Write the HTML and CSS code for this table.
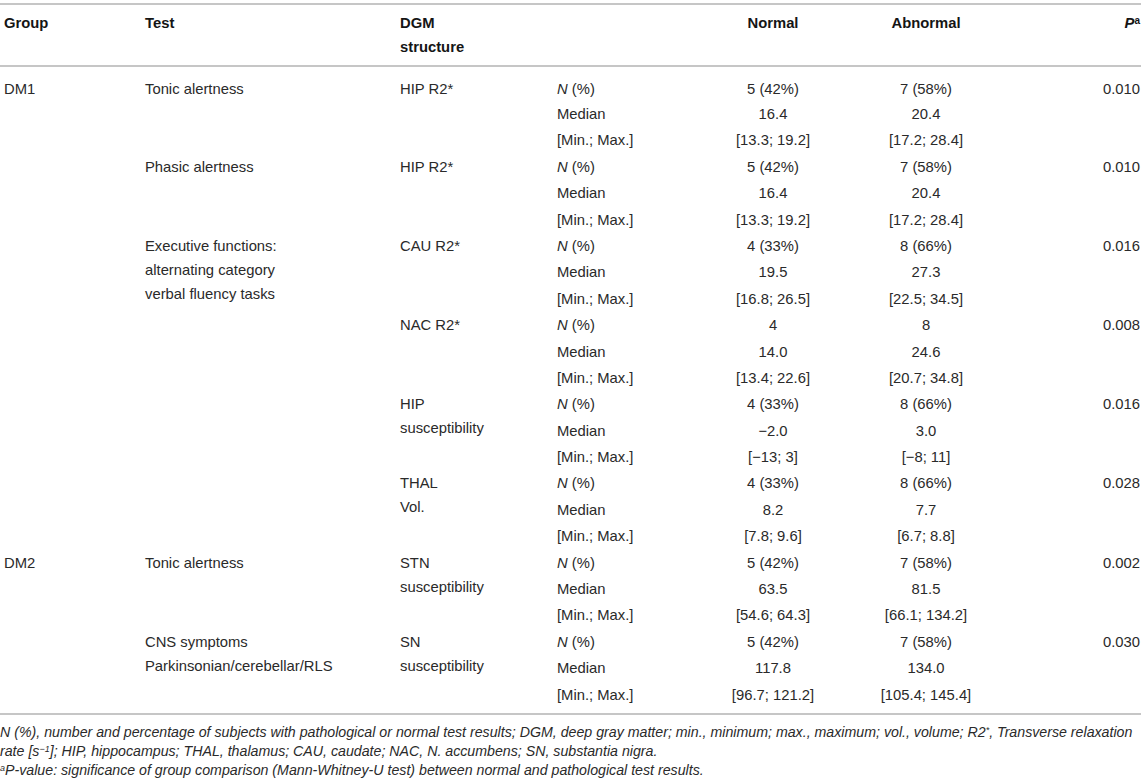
FILE: index.html
```html
<!DOCTYPE html>
<html lang="en">
<head>
    <meta charset="UTF-8">
    <title>DGM structure and test results</title>
    <link rel="stylesheet" href="styles.css">
</head>
<body>
    <table class="res">
        <col class="c1">
        <col class="c2">
        <col class="c3">
        <col class="c4">
        <col class="c5">
        <col class="c6">
        <col class="c7">
        <thead>
            <tr>
                <th>Group</th>
                <th>Test</th>
                <th>DGM<br>structure</th>
                <th></th>
                <th class="ac">Normal</th>
                <th class="ac">Abnormal</th>
                <th class="ar"><i>P</i><sup>a</sup></th>
            </tr>
        </thead>
        <tbody>
            <tr class="first">
                <td rowspan="18">DM1</td>
                <td rowspan="3">Tonic alertness</td>
                <td rowspan="3">HIP R2*</td>
                <td><i>N</i> (%)</td>
                <td class="ac">5 (42%)</td>
                <td class="ac">7 (58%)</td>
                <td class="ar" rowspan="3">0.010</td>
            </tr>
            <tr><td>Median</td><td class="ac">16.4</td><td class="ac">20.4</td></tr>
            <tr><td>[Min.; Max.]</td><td class="ac">[13.3; 19.2]</td><td class="ac">[17.2; 28.4]</td></tr>

            <tr>
                <td rowspan="3">Phasic alertness</td>
                <td rowspan="3">HIP R2*</td>
                <td><i>N</i> (%)</td>
                <td class="ac">5 (42%)</td>
                <td class="ac">7 (58%)</td>
                <td class="ar" rowspan="3">0.010</td>
            </tr>
            <tr><td>Median</td><td class="ac">16.4</td><td class="ac">20.4</td></tr>
            <tr><td>[Min.; Max.]</td><td class="ac">[13.3; 19.2]</td><td class="ac">[17.2; 28.4]</td></tr>

            <tr>
                <td rowspan="12">Executive functions:<br>alternating category<br>verbal fluency tasks</td>
                <td rowspan="3">CAU R2*</td>
                <td><i>N</i> (%)</td>
                <td class="ac">4 (33%)</td>
                <td class="ac">8 (66%)</td>
                <td class="ar" rowspan="3">0.016</td>
            </tr>
            <tr><td>Median</td><td class="ac">19.5</td><td class="ac">27.3</td></tr>
            <tr><td>[Min.; Max.]</td><td class="ac">[16.8; 26.5]</td><td class="ac">[22.5; 34.5]</td></tr>

            <tr>
                <td rowspan="3">NAC R2*</td>
                <td><i>N</i> (%)</td>
                <td class="ac">4</td>
                <td class="ac">8</td>
                <td class="ar" rowspan="3">0.008</td>
            </tr>
            <tr><td>Median</td><td class="ac">14.0</td><td class="ac">24.6</td></tr>
            <tr><td>[Min.; Max.]</td><td class="ac">[13.4; 22.6]</td><td class="ac">[20.7; 34.8]</td></tr>

            <tr>
                <td rowspan="3">HIP<br>susceptibility</td>
                <td><i>N</i> (%)</td>
                <td class="ac">4 (33%)</td>
                <td class="ac">8 (66%)</td>
                <td class="ar" rowspan="3">0.016</td>
            </tr>
            <tr><td>Median</td><td class="ac">&minus;2.0</td><td class="ac">3.0</td></tr>
            <tr><td>[Min.; Max.]</td><td class="ac">[&minus;13; 3]</td><td class="ac">[&minus;8; 11]</td></tr>

            <tr>
                <td rowspan="3">THAL<br>Vol.</td>
                <td><i>N</i> (%)</td>
                <td class="ac">4 (33%)</td>
                <td class="ac">8 (66%)</td>
                <td class="ar" rowspan="3">0.028</td>
            </tr>
            <tr><td>Median</td><td class="ac">8.2</td><td class="ac">7.7</td></tr>
            <tr><td>[Min.; Max.]</td><td class="ac">[7.8; 9.6]</td><td class="ac">[6.7; 8.8]</td></tr>

            <tr>
                <td rowspan="6">DM2</td>
                <td rowspan="3">Tonic alertness</td>
                <td rowspan="3">STN<br>susceptibility</td>
                <td><i>N</i> (%)</td>
                <td class="ac">5 (42%)</td>
                <td class="ac">7 (58%)</td>
                <td class="ar" rowspan="3">0.002</td>
            </tr>
            <tr><td>Median</td><td class="ac">63.5</td><td class="ac">81.5</td></tr>
            <tr><td>[Min.; Max.]</td><td class="ac">[54.6; 64.3]</td><td class="ac">[66.1; 134.2]</td></tr>

            <tr>
                <td rowspan="3">CNS symptoms<br>Parkinsonian/cerebellar/RLS</td>
                <td rowspan="3">SN<br>susceptibility</td>
                <td><i>N</i> (%)</td>
                <td class="ac">5 (42%)</td>
                <td class="ac">7 (58%)</td>
                <td class="ar" rowspan="3">0.030</td>
            </tr>
            <tr><td>Median</td><td class="ac">117.8</td><td class="ac">134.0</td></tr>
            <tr class="last"><td>[Min.; Max.]</td><td class="ac">[96.7; 121.2]</td><td class="ac">[105.4; 145.4]</td></tr>
        </tbody>
    </table>
    <div class="notes">
        <p><i>N</i> (%), number and percentage of subjects with pathological or normal test results; DGM, deep gray matter; min., minimum; max., maximum; vol., volume; <i>R2</i><sup>*</sup>, Transverse relaxation rate [s<sup>&minus;1</sup>]; HIP, hippocampus; THAL, thalamus; CAU, caudate; NAC, N. accumbens; SN, substantia nigra.</p>
        <p><sup>a</sup><i>P</i>-value: significance of group comparison (Mann-Whitney-U test) between normal and pathological test results.</p>
    </div>
</body>
</html>
```

FILE: styles.css
```css
body {
    margin: 0;
    background: #fff;
    color: #2a2a2a;
    font-family: "Liberation Sans", Arial, sans-serif;
}
sup {
    position: relative;
    top: -0.45em;
    vertical-align: baseline;
    line-height: 0;
}
.res {
    table-layout: fixed;
    width: 1141px;
    margin-top: 3px;
    border-collapse: collapse;
    border-top: 2px solid #c6c6c6;
    border-bottom: 2px solid #c6c6c6;
    font-size: 14.8px;
    line-height: 24px;
}
.c1 { width: 141px; }
.c2 { width: 255px; }
.c3 { width: 157px; }
.c4 { width: 147px; }
.c5 { width: 146px; }
.c6 { width: 160px; }
.c7 { width: 135px; }

.res th {
    padding: 6px 4px 6px;
    text-align: left;
    vertical-align: top;
    font-weight: bold;
    color: #151515;
    border-bottom: 2px solid #c6c6c6;
}
.res th sup {
    font-size: 10px;
    font-weight: bold;
}
.res tbody tr {
    height: 26.4px;
}
.res td {
    padding: 1px 4px 0;
    vertical-align: top;
}
.res .first td {
    padding-top: 10px;
}
.res .last td {
    padding-bottom: 6px;
}
.res .ac {
    text-align: center;
}
.res .ar {
    text-align: right;
    padding-right: 1px;
}

.notes {
    margin-top: 8px;
    font-size: 14.2px;
    line-height: 19px;
    font-style: italic;
}
.notes p {
    margin: 0;
}
.notes sup {
    font-size: 9px;
}
```
